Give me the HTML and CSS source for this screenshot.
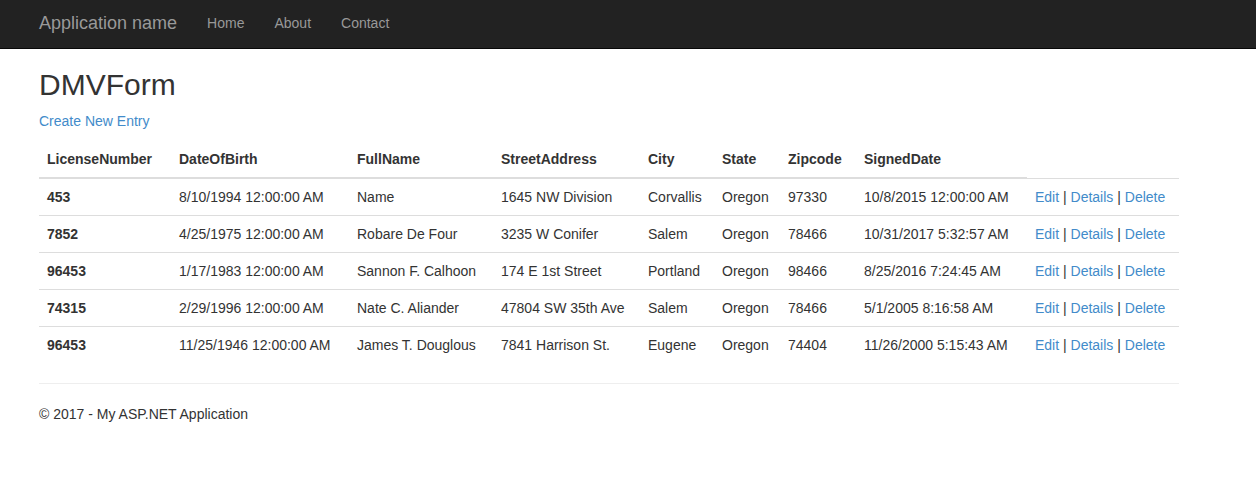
FILE: index.html
```html
<!DOCTYPE html>
<html>
<head>
<meta charset="utf-8">
<title>DMVForm</title>
<link rel="stylesheet" href="styles.css">
</head>
<body>
<div class="navbar">
  <div class="container nav-inner">
    <a class="brand" href="#">Application name</a>
    <ul class="nav">
      <li><a href="#">Home</a></li>
      <li><a href="#">About</a></li>
      <li><a href="#">Contact</a></li>
    </ul>
  </div>
</div>
<div class="container body-content">
  <h2 class="title">DMVForm</h2>
  <p class="create"><a href="#">Create New Entry</a></p>
  <table class="table">
    <colgroup>
      <col class="c-lic">
      <col class="c-dob">
      <col class="c-name">
      <col class="c-street">
      <col class="c-city">
      <col class="c-state">
      <col class="c-zip">
      <col class="c-signed">
      <col class="c-actions">
    </colgroup>
    <thead>
      <tr>
        <th>LicenseNumber</th>
        <th>DateOfBirth</th>
        <th>FullName</th>
        <th>StreetAddress</th>
        <th>City</th>
        <th>State</th>
        <th>Zipcode</th>
        <th>SignedDate</th>
        <th class="empty"></th>
      </tr>
    </thead>
    <tbody>
      <tr>
        <th>453</th><td>8/10/1994 12:00:00 AM</td><td>Name</td><td>1645 NW Division</td><td>Corvallis</td><td>Oregon</td><td>97330</td><td>10/8/2015 12:00:00 AM</td>
        <td><a href="#">Edit</a> | <a href="#">Details</a> | <a href="#">Delete</a></td>
      </tr>
      <tr>
        <th>7852</th><td>4/25/1975 12:00:00 AM</td><td>Robare De Four</td><td>3235 W Conifer</td><td>Salem</td><td>Oregon</td><td>78466</td><td>10/31/2017 5:32:57 AM</td>
        <td><a href="#">Edit</a> | <a href="#">Details</a> | <a href="#">Delete</a></td>
      </tr>
      <tr>
        <th>96453</th><td>1/17/1983 12:00:00 AM</td><td>Sannon F. Calhoon</td><td>174 E 1st Street</td><td>Portland</td><td>Oregon</td><td>98466</td><td>8/25/2016 7:24:45 AM</td>
        <td><a href="#">Edit</a> | <a href="#">Details</a> | <a href="#">Delete</a></td>
      </tr>
      <tr>
        <th>74315</th><td>2/29/1996 12:00:00 AM</td><td>Nate C. Aliander</td><td>47804 SW 35th Ave</td><td>Salem</td><td>Oregon</td><td>78466</td><td>5/1/2005 8:16:58 AM</td>
        <td><a href="#">Edit</a> | <a href="#">Details</a> | <a href="#">Delete</a></td>
      </tr>
      <tr>
        <th>96453</th><td>11/25/1946 12:00:00 AM</td><td>James T. Douglous</td><td>7841 Harrison St.</td><td>Eugene</td><td>Oregon</td><td>74404</td><td>11/26/2000 5:15:43 AM</td>
        <td><a href="#">Edit</a> | <a href="#">Details</a> | <a href="#">Delete</a></td>
      </tr>
    </tbody>
  </table>
  <hr class="rule">
  <footer>
    <p class="foot">&copy; 2017 - My ASP.NET Application</p>
  </footer>
</div>
</body>
</html>
```

FILE: styles.css
```css
* { box-sizing: border-box; }
html, body { margin: 0; }
body {
  font-family: "Liberation Sans", Arial, Helvetica, sans-serif;
  font-size: 14px;
  line-height: 20px;
  color: #333;
  background: #fff;
  padding-top: 48px;
}
a { color: #428bca; text-decoration: none; }

.navbar {
  position: fixed;
  top: 0; left: 0; right: 0;
  height: 49px;
  background: #222;
  border-bottom: 1px solid #080808;
}
.container {
  width: 1170px;
  margin-left: 24px;
  padding: 0 15px;
}
.nav-inner {
  display: flex;
  align-items: flex-start;
  height: 48px;
}
.brand {
  color: #999;
  font-size: 18px;
  line-height: 20px;
  padding: 13px 15px 15px 0;
}
.nav {
  display: flex;
  list-style: none;
  margin: 0;
  padding: 0;
}
.nav a {
  display: block;
  color: #999;
  padding: 13px 15px 15px;
  line-height: 20px;
}

.title {
  font-size: 30px;
  font-weight: 500;
  line-height: 33px;
  margin: 20px 0 10px;
}
.create { margin: 0 0 10px; }

.table {
  width: 100%;
  table-layout: fixed;
  border-collapse: collapse;
  border-spacing: 0;
  margin-bottom: 20px;
}
.c-lic { width: 132px; }
.c-dob { width: 178px; }
.c-name { width: 144px; }
.c-street { width: 147px; }
.c-city { width: 74px; }
.c-state { width: 66px; }
.c-zip { width: 76px; }
.c-signed { width: 171px; }
.c-actions { width: 152px; }

.table th, .table td {
  padding: 8px;
  line-height: 20px;
  text-align: left;
  vertical-align: top;
  white-space: nowrap;
}
.table thead th {
  border-bottom: 2px solid #ddd;
  font-weight: bold;
}
.table thead th.empty { border-bottom: 0; }
.table tbody th, .table tbody td {
  border-top: 1px solid #ddd;
}
.table tbody th { font-weight: bold; }

.rule {
  border: 0;
  border-top: 1px solid #eee;
  margin: 20px 0;
}
.foot { margin: 0 0 10px; }
```
